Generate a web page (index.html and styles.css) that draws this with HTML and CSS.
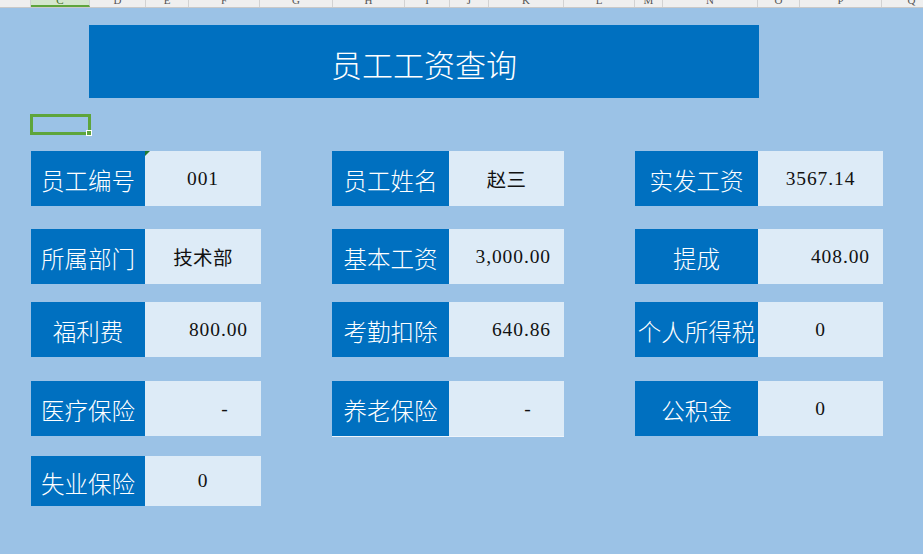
FILE: index.html
```html
<!DOCTYPE html>
<html lang="zh-CN">
<head>
<meta charset="utf-8">
<title>员工工资查询</title>
<link rel="stylesheet" href="styles.css">
</head>
<body>
<div class="colhead">
  <div class="ch col-b"></div>
  <div class="ch col-c active"><span>C</span></div>
  <div class="ch col-d"><span>D</span></div>
  <div class="ch col-e"><span>E</span></div>
  <div class="ch col-f"><span>F</span></div>
  <div class="ch col-g"><span>G</span></div>
  <div class="ch col-h"><span>H</span></div>
  <div class="ch col-i"><span>I</span></div>
  <div class="ch col-j"><span>J</span></div>
  <div class="ch col-k"><span>K</span></div>
  <div class="ch col-l"><span>L</span></div>
  <div class="ch col-m"><span>M</span></div>
  <div class="ch col-n"><span>N</span></div>
  <div class="ch col-o"><span>O</span></div>
  <div class="ch col-p"><span>P</span></div>
  <div class="ch col-q"><span>Q</span></div>
</div>

<main class="sheet">
  <div class="title">员工工资查询</div>

  <div class="cursor"><span class="handle"></span></div>

  <div class="form">
    <div class="row">
      <div class="field f1"><div class="lbl">员工编号</div><div class="val center flagged num">001</div></div>
      <div class="field f2"><div class="lbl">员工姓名</div><div class="val center">赵三</div></div>
      <div class="field f3"><div class="lbl">实发工资</div><div class="val center num">3567.14</div></div>
    </div>
    <div class="row r2">
      <div class="field f1"><div class="lbl">所属部门</div><div class="val center">技术部</div></div>
      <div class="field f2"><div class="lbl">基本工资</div><div class="val right num">3,000.00</div></div>
      <div class="field f3"><div class="lbl">提成</div><div class="val right num">408.00</div></div>
    </div>
    <div class="row r3">
      <div class="field f1"><div class="lbl">福利费</div><div class="val right num">800.00</div></div>
      <div class="field f2"><div class="lbl">考勤扣除</div><div class="val right num">640.86</div></div>
      <div class="field f3"><div class="lbl">个人所得税</div><div class="val center num">0</div></div>
    </div>
    <div class="row r4">
      <div class="field f1"><div class="lbl">医疗保险</div><div class="val dash">-</div></div>
      <div class="field f2 underlined"><div class="lbl">养老保险</div><div class="val dash">-</div></div>
      <div class="field f3"><div class="lbl">公积金</div><div class="val center num">0</div></div>
    </div>
    <div class="row r5">
      <div class="field f1"><div class="lbl">失业保险</div><div class="val center num">0</div></div>
    </div>
  </div>
</main>
</body>
</html>
```

FILE: styles.css
```css
html, body {
  margin: 0;
  padding: 0;
}

body {
  width: 923px;
  height: 554px;
  overflow: hidden;
  background: #9bc2e6;
  font-family: "Liberation Serif", "Noto Sans CJK SC", serif;
}

/* column header strip (cut off at the top) */
.colhead {
  display: flex;
  height: 8px;
  overflow: hidden;
  background: #efefef;
  border-bottom: 1px solid #c9c9c9;
  box-sizing: border-box;
  white-space: nowrap;
}

.ch {
  flex: none;
  box-sizing: border-box;
  border-right: 1px solid #d2d2d2;
  text-align: center;
  font-family: "Liberation Serif", serif;
  font-size: 11px;
  line-height: 11px;
  color: #555;
}

.ch span {
  display: block;
  margin-top: -5px;
}

.ch.active {
  background: #d4e6cd;
  border-bottom: 2px solid #5ea53b;
  color: #3d6e28;
}

.col-b { width: 31px; }
.col-c { width: 59px; }
.col-d { width: 56px; }
.col-e { width: 43px; }
.col-f { width: 71px; }
.col-g { width: 73px; }
.col-h { width: 72px; }
.col-i { width: 45px; }
.col-j { width: 39px; }
.col-k { width: 75px; }
.col-l { width: 71px; }
.col-m { width: 28px; }
.col-n { width: 95px; }
.col-o { width: 42px; }
.col-p { width: 82px; }
.col-q { width: 60px; }

.sheet {
  padding-top: 17px;
}

.title {
  margin-left: 89px;
  width: 670px;
  height: 73px;
  box-sizing: border-box;
  padding-top: 3px;
  background: #0070c0;
  color: #fff;
  display: flex;
  align-items: center;
  justify-content: center;
  font-family: "Noto Sans CJK SC", sans-serif;
  font-weight: 300;
  font-size: 31px;
}

/* active cell cursor */
.cursor {
  position: relative;
  margin: 16px 0 0 30px;
  width: 61px;
  height: 21px;
  box-sizing: border-box;
  border: 3px solid #5ea53b;
}

.handle {
  position: absolute;
  right: -4px;
  bottom: -4px;
  width: 6px;
  height: 6px;
  box-sizing: border-box;
  background: #5ea53b;
  border: 1px solid #fff;
}

/* form */
.form {
  margin-top: 16px;
  padding-left: 31px;
}

.row {
  display: grid;
  grid-template-columns: 230px 232px 248px;
  column-gap: 71px;
  height: 55px;
}

.r2 { margin-top: 23px; }
.r3 { margin-top: 18px; }
.r4 { margin-top: 24px; }
.r5 { margin-top: 20px; height: 50px; }

.field {
  display: grid;
}

.f1 { grid-template-columns: 114px 116px; }
.f2 { grid-template-columns: 117px 115px; }
.f3 { grid-template-columns: 123px 125px; }

.underlined {
  box-shadow: 0 1px 0 #eef4fb;
}

.lbl {
  background: #0070c0;
  color: #fff;
  display: flex;
  align-items: center;
  justify-content: center;
  padding-top: 3px;
  box-sizing: border-box;
  font-family: "Noto Sans CJK SC", sans-serif;
  font-weight: 300;
  font-size: 23.5px;
  white-space: nowrap;
  overflow: hidden;
}

.val {
  position: relative;
  background: #ddebf7;
  color: #111;
  display: flex;
  align-items: center;
  font-family: "Liberation Serif", "Noto Sans CJK SC", serif;
  font-size: 19.5px;
  letter-spacing: 0.3px;
  white-space: nowrap;
}

.val.num { letter-spacing: 0.9px; }

.val.center { justify-content: center; }
.val.right { justify-content: flex-end; padding-right: 13px; }
.val.dash { justify-content: flex-end; padding-right: 33px; }

.flagged::before {
  content: "";
  position: absolute;
  left: 0;
  top: 0;
  border-top: 5px solid #1e7b34;
  border-right: 5px solid transparent;
}
```
